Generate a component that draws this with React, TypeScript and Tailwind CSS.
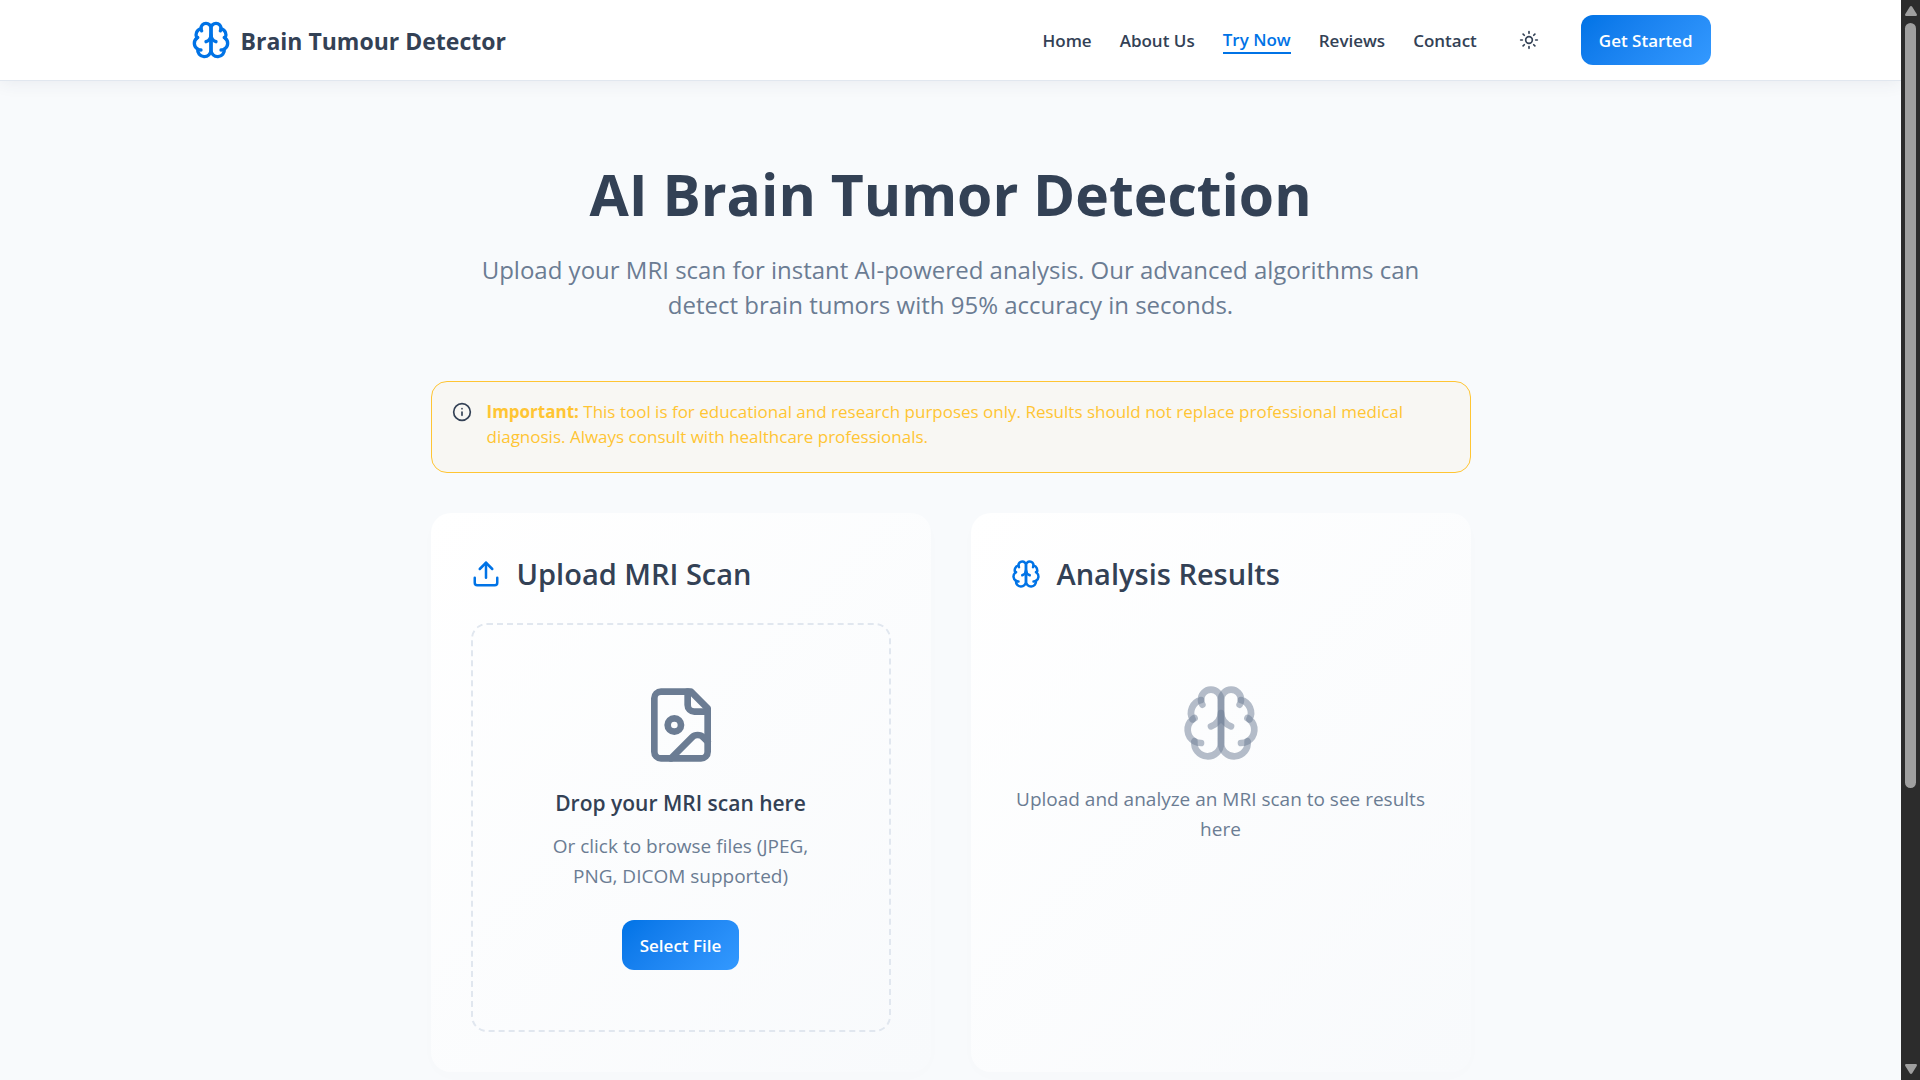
import { useRef } from "react";
import { Info, Sun, Upload } from "lucide-react";

function BrainIcon({ className }: { className?: string }) {
  return (
    <svg
      viewBox="0 0 24 24"
      fill="none"
      stroke="currentColor"
      strokeWidth={2}
      strokeLinecap="round"
      strokeLinejoin="round"
      aria-hidden="true"
      className={className}
    >
      <path d="M12 5a3 3 0 1 0-5.997.125 4 4 0 0 0-2.526 5.77 4 4 0 0 0 .556 6.588A4 4 0 1 0 12 18Z" />
      <path d="M12 5a3 3 0 1 1 5.997.125 4 4 0 0 1 2.526 5.77 4 4 0 0 1-.556 6.588A4 4 0 1 1 12 18Z" />
      <path d="M15 13a4.5 4.5 0 0 1-3-4 4.5 4.5 0 0 1-3 4" />
      <path d="M17.599 6.5a3 3 0 0 0 .399-1.375" />
      <path d="M6.003 5.125A3 3 0 0 0 6.401 6.5" />
      <path d="M3.477 10.896a4 4 0 0 1 .585-.396" />
      <path d="M19.938 10.5a4 4 0 0 1 .585.396" />
      <path d="M6 18a4 4 0 0 1-1.967-.516" />
      <path d="M19.967 17.484A4 4 0 0 1 18 18" />
    </svg>
  );
}

function FileImageIcon({ className }: { className?: string }) {
  return (
    <svg
      viewBox="0 0 24 24"
      fill="none"
      stroke="currentColor"
      strokeWidth={2}
      strokeLinecap="round"
      strokeLinejoin="round"
      aria-hidden="true"
      className={className}
    >
      <path d="M15 2H6a2 2 0 0 0-2 2v16a2 2 0 0 0 2 2h12a2 2 0 0 0 2-2V7Z" />
      <path d="M14 2v4a2 2 0 0 0 2 2h4" />
      <circle cx="10" cy="12" r="2" />
      <path d="m20 17-1.296-1.296a2.41 2.41 0 0 0-3.408 0L9 22" />
    </svg>
  );
}

const links = ["Home", "About Us", "Try Now", "Reviews", "Contact"];

const primaryButton =
  "h-[50px] cursor-pointer rounded-xl bg-linear-135 from-[#0073e6] to-[#3399ff] px-[18px] pt-0.5 text-[17px] leading-6 font-semibold text-white";

function Header() {
  return (
    <header className="relative border-b border-[#e1e7ef] bg-white shadow-[0_2px_16px_rgba(51,65,85,0.08)]">
      <div className="mx-auto flex h-20 max-w-[1600px] items-center justify-between px-10">
        <a href="#home" className="flex items-center gap-2.5">
          <BrainIcon className="size-10 text-[#0073e6]" />
          <span className="pt-0.5 text-[23px] font-bold">
            Brain Tumour Detector
          </span>
        </a>
        <div className="flex items-center">
          <nav className="flex items-center gap-7 pt-0.5 text-[17px] leading-6 font-semibold">
            {links.map((label) => (
              <a
                key={label}
                href={"#" + label.toLowerCase().replace(" ", "-")}
                className={
                  label === "Try Now"
                    ? "border-b-2 border-[#0073e6] text-[#0073e6]"
                    : ""
                }
              >
                {label}
              </a>
            ))}
          </nav>
          <button
            type="button"
            aria-label="Toggle theme"
            className="mx-[42px] cursor-pointer"
          >
            <Sun className="size-5" />
          </button>
          <button type="button" className={primaryButton}>
            Get Started
          </button>
        </div>
      </div>
    </header>
  );
}

const card =
  "rounded-[20px] bg-linear-135 from-white to-[#f8fafc] p-10 shadow-[0_4px_20px_rgba(51,65,85,0.01)]";

function UploadCard() {
  const input = useRef<HTMLInputElement>(null);
  return (
    <section className={card}>
      <h2 className="flex items-center gap-4 text-[29px] leading-[42px] font-semibold">
        <Upload className="size-[30px] text-[#0073e6]" />
        Upload MRI Scan
      </h2>
      <div className="mt-7 flex flex-col items-center rounded-2xl border-2 border-dashed border-[#e1e7ef] p-[60px] text-center">
        <FileImageIcon className="size-20 text-[#6b7c93]" />
        <h3 className="mt-[22px] text-[21px] leading-[33px] font-semibold">
          Drop your MRI scan here
        </h3>
        <p className="mt-[11px] text-[19px] leading-[30px] text-[#6b7c93]">
          Or click to browse files (JPEG, PNG, DICOM supported)
        </p>
        <input
          ref={input}
          type="file"
          aria-label="MRI scan file"
          className="hidden"
        />
        <button
          type="button"
          onClick={() => input.current?.click()}
          className={primaryButton + " mt-[29px]"}
        >
          Select File
        </button>
      </div>
    </section>
  );
}

function ResultsCard() {
  return (
    <section className={card}>
      <h2 className="flex items-center gap-4 text-[29px] leading-[42px] font-semibold">
        <BrainIcon className="size-[30px] text-[#0073e6]" />
        Analysis Results
      </h2>
      <div className="mt-7 flex flex-col items-center pt-[60px] text-center">
        <BrainIcon className="size-20 text-[#6b7c93]/50" />
        <p className="mt-[21px] text-[19px] leading-[30px] text-[#6b7c93]">
          Upload and analyze an MRI scan to see results here
        </p>
      </div>
    </section>
  );
}

function Scrollbar() {
  return (
    <div
      aria-hidden="true"
      className="flex w-[19px] shrink-0 flex-col items-center bg-[#2c2c2c] py-1.5 text-[#9f9f9f]"
    >
      <svg viewBox="0 0 12 10" className="h-2.5 w-3 fill-current">
        <path d="M6 0q.7 0 1.200.8L11.700 8q.8 2-.9 2H1.200Q-.5 10 .3 8L4.800.8Q5.300 0 6 0Z" />
      </svg>
      <div className="my-[7px] w-[11px] flex-1">
        <div className="h-[74%] rounded-full bg-current" />
      </div>
      <svg viewBox="0 0 12 10" className="h-2.5 w-3 rotate-180 fill-current">
        <path d="M6 0q.7 0 1.200.8L11.700 8q.8 2-.9 2H1.200Q-.5 10 .3 8L4.800.8Q5.300 0 6 0Z" />
      </svg>
    </div>
  );
}

export default function App() {
  return (
    <div className="flex h-screen overflow-hidden bg-[#f8fafc] font-['Segoe_UI','Open_Sans',sans-serif] text-[#334155]">
      <div className="min-w-0 flex-1 overflow-hidden">
        <Header />
        <main className="mx-auto max-w-[1040px] pt-[79px]">
          <div className="mx-auto max-w-[960px] text-center">
            <h1 className="text-[57px] leading-[68px] font-bold">
              AI Brain Tumor Detection
            </h1>
            <p className="mt-6 text-2xl leading-[35px] text-[#6b7c93]">
              Upload your MRI scan for instant AI-powered analysis. Our advanced
              algorithms can detect brain tumors with 95% accuracy in seconds.
            </p>
          </div>
          <div
            role="note"
            className="mt-[59px] flex gap-[15px] rounded-2xl border border-[#ffc533] bg-[#f8f7f3] px-5 pt-[17px] pb-[23px]"
          >
            <Info className="mt-[3px] size-5 shrink-0" />
            <p className="text-[17px] leading-[25px] text-[#ffc533]">
              <strong className="font-bold">Important:</strong> This tool is for
              educational and research purposes only. Results should not replace
              professional medical diagnosis. Always consult with healthcare
              professionals.
            </p>
          </div>
          <div className="mt-10 grid grid-cols-2 gap-10">
            <UploadCard />
            <ResultsCard />
          </div>
        </main>
      </div>
      <Scrollbar />
    </div>
  );
}
